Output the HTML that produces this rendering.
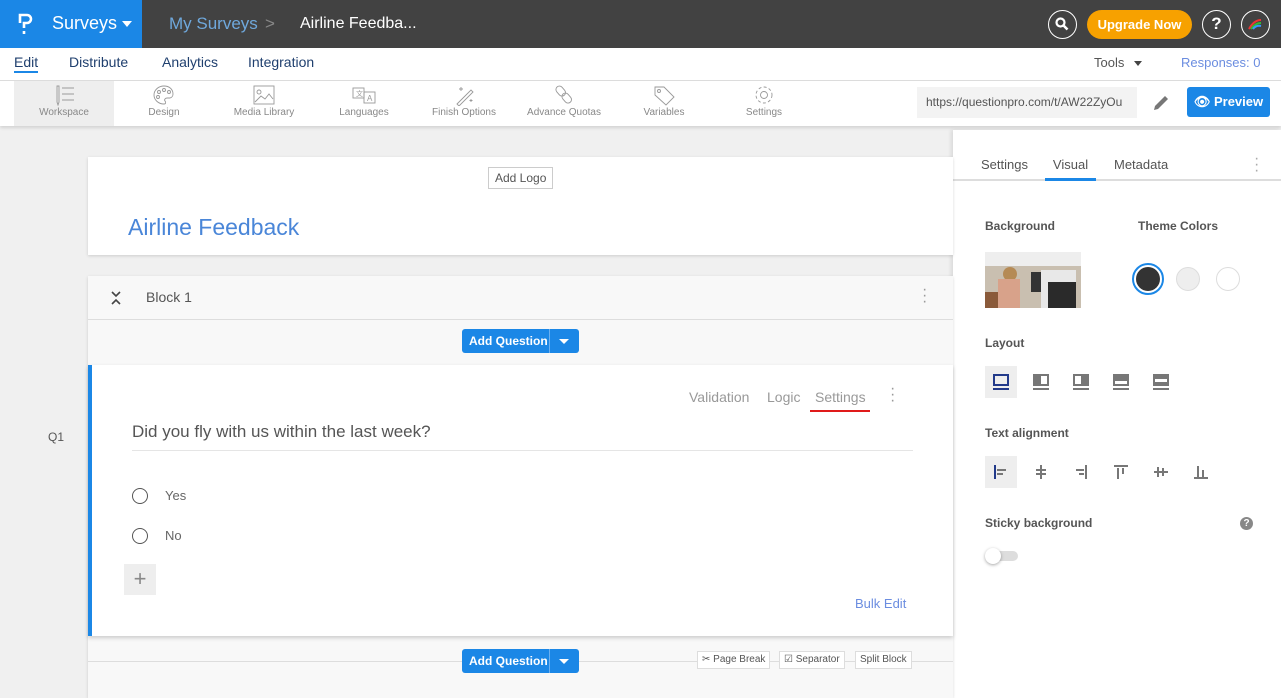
<!DOCTYPE html>
<html><head><meta charset="utf-8"><style>
*{box-sizing:border-box;margin:0;padding:0}
body{width:1281px;height:698px;overflow:hidden;font-family:"Liberation Sans",sans-serif;background:#f0f0f0;position:relative;color:#545454}
.abs{position:absolute}
.top{left:0;top:0;width:1281px;height:48px;background:#424242}
.brand{left:0;top:0;width:142px;height:48px;background:#1b87e6;color:#fff}
.nav2{left:0;top:48px;width:1281px;height:33px;background:#fff;border-bottom:1px solid #ddd;font-size:14px;color:#1f3f6e}
.tb{left:0;top:81px;width:1281px;height:45px;background:#fff;box-shadow:0 2px 3px rgba(0,0,0,.12)}
.ti{position:absolute;top:0;height:45px;width:100px;text-align:center;font-size:10px;color:#888}
.ti svg{display:block;margin:3px auto 1px}
.ti svg *{stroke-width:0.9}
.btn{background:#1b87e6;color:#fff;font-weight:bold;font-size:12px;border-radius:3px}
.rp{left:953px;top:130px;width:328px;height:568px;background:#fff;box-shadow:-2px 0 4px rgba(0,0,0,.1)}
.lbl{font-size:12px;font-weight:bold;color:#555}
.ic{position:absolute;width:32px;height:32px;top:0}
.chip{position:absolute;top:651px;height:18px;border:1px solid #ddd;background:#fff;font-size:10px;padding:2px 4px;color:#555}
</style></head><body>
<div class="abs top"></div>
<div class="abs brand">
 <svg class="abs" style="left:17px;top:12px" width="20" height="24"><path d="M3 11V3h7a4 4 0 0 1 0 8H7v5" stroke="#fff" stroke-width="2.6" fill="none"/><rect x="5.7" y="19" width="2.6" height="3" fill="#fff"/></svg>
 <div class="abs" style="left:52px;top:13px;font-size:18px">Surveys</div>
 <div class="abs" style="left:122px;top:21px;border:5px solid transparent;border-top:6px solid #fff"></div>
</div>
<div class="abs" style="left:169px;top:14px;font-size:17px;color:#6fa8dc">My Surveys</div>
<div class="abs" style="left:265px;top:14px;font-size:17px;color:#888">&gt;</div>
<div class="abs" style="left:300px;top:15px;font-size:16px;color:#fff">Airline Feedba...</div>
<div class="abs" style="left:1048px;top:10px;width:29px;height:29px;border:1.5px solid #fff;border-radius:50%"><svg width="26" height="26" viewBox="0 0 26 26"><circle cx="11.5" cy="11.5" r="4" stroke="#fff" stroke-width="2.2" fill="none"/><path d="M14.5 14.5l4 4" stroke="#fff" stroke-width="2.6"/></svg></div>
<div class="abs" style="left:1087px;top:10px;width:105px;height:29px;background:#f7a100;border-radius:15px;color:#fff;font-weight:bold;font-size:13px;text-align:center;line-height:29px">Upgrade Now</div>
<div class="abs" style="left:1202px;top:10px;width:29px;height:29px;border:1.5px solid #fff;border-radius:50%;color:#fff;font-weight:bold;font-size:17px;text-align:center;line-height:26px">?</div>
<div class="abs" style="left:1241px;top:10px;width:29px;height:29px;border:1.5px solid #fff;border-radius:50%"><svg width="26" height="26"><path d="M7 18q5-9 12-9" stroke="#e33" stroke-width="2" fill="none"/><path d="M9 18q4-6 10-6" stroke="#3b3" stroke-width="2" fill="none"/><path d="M11 18q3-4 8-3" stroke="#39f" stroke-width="2" fill="none"/></svg></div>

<div class="abs nav2">
 <span class="abs" style="left:14px;top:6px;color:#1f3f6e;border-bottom:2px solid #1b87e6;padding-bottom:1px">Edit</span>
 <span class="abs" style="left:69px;top:6px">Distribute</span>
 <span class="abs" style="left:162px;top:6px">Analytics</span>
 <span class="abs" style="left:248px;top:6px">Integration</span>
 <span class="abs" style="left:1094px;top:7px;font-size:13px;color:#555">Tools</span>
 <span class="abs" style="left:1134px;top:13px;border:4px solid transparent;border-top:5px solid #444"></span>
 <span class="abs" style="left:1181px;top:7px;font-size:13px;color:#6b8de0">Responses: 0</span>
</div>

<div class="abs tb">
 <div class="ti" style="left:14px;width:100px;background:#eee"><svg width="26" height="22"><path d="M6 2v16l1 3 1-3V2z" stroke="#999" fill="none"/><path d="M11 4h12M11 10h12M11 16h12" stroke="#999"/></svg>Workspace</div>
 <div class="ti" style="left:114px"><svg width="26" height="22"><path d="M13 2a10 9 0 1 0 0 18c2 0 2-2 1-3s0-3 2-3h3a4 4 0 0 0 3-4C22 5 18 2 13 2z" stroke="#999" fill="none"/><circle cx="8" cy="8" r="1.5" stroke="#999" fill="none"/><circle cx="13" cy="6" r="1.5" stroke="#999" fill="none"/><circle cx="18" cy="8" r="1.5" stroke="#999" fill="none"/><circle cx="7" cy="13" r="1.5" stroke="#999" fill="none"/></svg>Design</div>
 <div class="ti" style="left:214px"><svg width="26" height="22"><rect x="3" y="2" width="20" height="18" stroke="#999" fill="none"/><circle cx="8" cy="8" r="2" stroke="#999" fill="none"/><path d="M4 18l6-6 4 3 4-5 4 5" stroke="#999" fill="none"/></svg>Media Library</div>
 <div class="ti" style="left:314px"><svg width="26" height="22"><rect x="2" y="4" width="11" height="10" stroke="#999" fill="none"/><rect x="13" y="8" width="11" height="11" stroke="#999" fill="none"/><text x="5" y="12" font-size="7" fill="#999">文</text><text x="16" y="17" font-size="8" fill="#999">A</text></svg>Languages</div>
 <div class="ti" style="left:414px"><svg width="26" height="22"><path d="M6 20L20 6l2 2L8 22z" stroke="#999" fill="none"/><path d="M10 3v4M8 5h4M20 15v3M18.5 16.5h3" stroke="#999"/></svg>Finish Options</div>
 <div class="ti" style="left:514px"><svg width="26" height="22"><rect x="6" y="2" width="7" height="11" rx="3.5" transform="rotate(-40 9 7)" stroke="#999" fill="none"/><rect x="12" y="9" width="7" height="11" rx="3.5" transform="rotate(-40 15 14)" stroke="#999" fill="none"/></svg>Advance Quotas</div>
 <div class="ti" style="left:614px"><svg width="26" height="22"><path d="M4 3h9l10 10-8 8L4 11z" stroke="#999" fill="none"/><circle cx="8" cy="7" r="1.5" stroke="#999" fill="none"/></svg>Variables</div>
 <div class="ti" style="left:714px"><svg width="26" height="22"><circle cx="13" cy="11" r="3.5" stroke="#999" fill="none"/><circle cx="13" cy="11" r="8" stroke="#999" stroke-dasharray="3 2.3" fill="none"/></svg>Settings</div>
 <div class="abs" style="left:917px;top:6px;width:220px;height:31px;background:#f3f3f3;font-size:12px;color:#555;padding:8px 9px;white-space:nowrap;overflow:hidden">https://questionpro.com/t/AW22ZyOu</div>
 <svg class="abs" style="left:1150px;top:11px" width="22" height="22"><path d="M4 18l1-4L15 4l3 3L8 17z" fill="#777"/></svg>
 <div class="abs btn" style="left:1187px;top:6px;width:83px;height:30px;line-height:30px;text-align:center;font-size:13px">&#128065;&#xFE0E; Preview</div>
</div>

<div class="abs rp">
 <div class="abs" style="left:0;top:18px;width:328px;height:33px;border-bottom:2px solid #ddd;font-size:13px">
  <span class="abs" style="left:28px;top:9px">Settings</span>
  <span class="abs" style="left:92px;top:0;width:51px;height:33px;border-bottom:3px solid #1b87e6;text-align:center;padding-top:9px">Visual</span>
  <span class="abs" style="left:161px;top:9px">Metadata</span>
  <span class="abs" style="left:301px;top:8px;width:4px;line-height:6px;font-size:16px;color:#aaa">·<br>·<br>·</span>
 </div>
 <div class="abs lbl" style="left:32px;top:89px">Background</div>
 <div class="abs lbl" style="left:185px;top:89px">Theme Colors</div>
 <svg class="abs" style="left:32px;top:122px" width="96" height="56"><rect width="96" height="56" fill="#c9bfb0"/><rect y="0" width="96" height="14" fill="#eee"/><rect x="56" y="18" width="35" height="38" fill="#e8e8e8"/><rect x="63" y="30" width="28" height="26" fill="#2a2a2a"/><circle cx="25" cy="22" r="7" fill="#b58a55"/><rect x="13" y="27" width="22" height="29" fill="#d8a28a"/><rect x="46" y="20" width="10" height="20" fill="#333"/><rect x="0" y="40" width="13" height="16" fill="#8a5a3a"/></svg>
 <div class="abs" style="left:179px;top:133px;width:32px;height:32px;border-radius:50%;border:2px solid #1b87e6;padding:2px"><div style="width:24px;height:24px;border-radius:50%;background:#333"></div></div>
 <div class="abs" style="left:223px;top:137px;width:24px;height:24px;border-radius:50%;background:#eee;border:1px solid #ddd"></div>
 <div class="abs" style="left:263px;top:137px;width:24px;height:24px;border-radius:50%;background:#fff;border:1px solid #ddd"></div>
 <div class="abs lbl" style="left:32px;top:206px">Layout</div>
 <div class="abs" style="left:32px;top:236px;width:320px;height:32px">
  <div class="ic" style="left:0;background:#eee"><svg width="32" height="32"><rect x="9" y="9" width="14" height="10" stroke="#223a8a" stroke-width="2" fill="none"/><path d="M8 23h16" stroke="#223a8a" stroke-width="2"/></svg></div>
  <div class="ic" style="left:40px"><svg width="32" height="32"><rect x="9" y="9" width="14" height="10" stroke="#777" stroke-width="2" fill="none"/><rect x="9" y="9" width="7" height="10" fill="#777"/><path d="M8 23h16" stroke="#777" stroke-width="2"/></svg></div>
  <div class="ic" style="left:80px"><svg width="32" height="32"><rect x="9" y="9" width="14" height="10" stroke="#777" stroke-width="2" fill="none"/><rect x="16" y="9" width="7" height="10" fill="#777"/><path d="M8 23h16" stroke="#777" stroke-width="2"/></svg></div>
  <div class="ic" style="left:120px"><svg width="32" height="32"><rect x="9" y="9" width="14" height="10" stroke="#777" stroke-width="2" fill="none"/><rect x="9" y="9" width="14" height="6" fill="#777"/><path d="M8 23h16" stroke="#777" stroke-width="2"/></svg></div>
  <div class="ic" style="left:160px"><svg width="32" height="32"><rect x="9" y="9" width="14" height="10" stroke="#777" stroke-width="2" fill="#777"/><rect x="10" y="13" width="12" height="3" fill="#fff"/><path d="M8 23h16" stroke="#777" stroke-width="2"/></svg></div>
 </div>
 <div class="abs lbl" style="left:32px;top:296px">Text alignment</div>
 <div class="abs" style="left:32px;top:326px;width:320px;height:32px">
  <div class="ic" style="left:0;background:#eee"><svg width="32" height="32"><path d="M10 9v14" stroke="#223a8a" stroke-width="2"/><path d="M12 14h9M12 18h6" stroke="#777" stroke-width="2"/></svg></div>
  <div class="ic" style="left:40px"><svg width="32" height="32"><path d="M16 9v14M11 14h10M11 18h10" stroke="#777" stroke-width="2"/></svg></div>
  <div class="ic" style="left:80px"><svg width="32" height="32"><path d="M21 9v14M11 14h8M14 18h5" stroke="#777" stroke-width="2"/></svg></div>
  <div class="ic" style="left:120px"><svg width="32" height="32"><path d="M9 10h14M13 12v11M18 12v6" stroke="#777" stroke-width="2"/></svg></div>
  <div class="ic" style="left:160px"><svg width="32" height="32"><path d="M9 16h14M13 11v10M18 12v8" stroke="#777" stroke-width="2"/></svg></div>
  <div class="ic" style="left:200px"><svg width="32" height="32"><path d="M9 22h14M13 10v11M18 14v7" stroke="#777" stroke-width="2"/></svg></div>
 </div>
 <div class="abs lbl" style="left:32px;top:386px">Sticky background</div>
 <div class="abs" style="left:287px;top:387px;width:13px;height:13px;border-radius:50%;background:#888;color:#fff;font-size:10px;font-weight:bold;text-align:center;line-height:13px">?</div>
 <div class="abs" style="left:33px;top:421px;width:32px;height:10px;border-radius:5px;background:#ddd"></div>
 <div class="abs" style="left:32px;top:418px;width:16px;height:16px;border-radius:50%;background:#fff;box-shadow:0 1px 3px rgba(0,0,0,.35)"></div>
</div>

<div class="abs" style="left:88px;top:157px;width:865px;height:98px;background:#fff;box-shadow:0 1px 3px rgba(0,0,0,.15)">
 <div class="abs" style="left:400px;top:10px;border:1px solid #ccc;padding:3px 6px;font-size:12px;color:#555">Add Logo</div>
 <div class="abs" style="left:40px;top:57px;font-size:23px;color:#4a86d8">Airline Feedback</div>
</div>

<div class="abs" style="left:88px;top:276px;width:865px;height:422px;background:#f8f8f8;box-shadow:0 1px 3px rgba(0,0,0,.15)">
 <div class="abs" style="left:0;top:0;width:865px;height:44px;border-bottom:1px solid #ddd">
  <svg class="abs" style="left:22px;top:14px" width="12" height="16"><path d="M2 2l4 4 4-4M2 14l4-4 4 4" stroke="#444" stroke-width="1.6" fill="none"/></svg>
  <span class="abs" style="left:58px;top:13px;font-size:14px;color:#555">Block 1</span>
  <span class="abs" style="left:834px;top:11px;line-height:6px;font-size:16px;color:#999">·<br>·<br>·</span>
 </div>
 <div class="abs btn" style="left:374px;top:53px;width:117px;height:24px;line-height:24px;padding-left:7px">Add Question<span class="abs" style="left:87px;top:0;width:1px;height:24px;background:#6cb0f0"></span><span class="abs" style="left:97px;top:10px;border:5px solid transparent;border-top:5px solid #fff"></span></div>
 <div class="abs" style="left:0;top:89px;width:865px;height:271px;background:#fff;border-left:4px solid #1b87e6;box-shadow:0 2px 4px rgba(0,0,0,.18)">
  <span class="abs" style="left:597px;top:24px;font-size:14px;color:#999">Validation</span>
  <span class="abs" style="left:675px;top:24px;font-size:14px;color:#999">Logic</span>
  <span class="abs" style="left:723px;top:24px;font-size:14px;color:#999">Settings</span>
  <span class="abs" style="left:718px;top:45px;width:60px;height:2px;background:#e01a1a"></span>
  <span class="abs" style="left:798px;top:21px;line-height:6px;font-size:16px;color:#999">·<br>·<br>·</span>
  <span class="abs" style="left:40px;top:57px;font-size:17px;color:#555">Did you fly with us within the last week?</span>
  <span class="abs" style="left:40px;top:85px;width:781px;height:1px;background:#e5e5e5"></span>
  <span class="abs" style="left:40px;top:123px;width:16px;height:16px;border:1.5px solid #555;border-radius:50%"></span>
  <span class="abs" style="left:73px;top:123px;font-size:13px;color:#666">Yes</span>
  <span class="abs" style="left:40px;top:163px;width:16px;height:16px;border:1.5px solid #555;border-radius:50%"></span>
  <span class="abs" style="left:73px;top:163px;font-size:13px;color:#666">No</span>
  <span class="abs" style="left:32px;top:199px;width:32px;height:31px;background:#eee;text-align:center;font-size:22px;line-height:30px;color:#888">+</span>
  <span class="abs" style="left:763px;top:231px;font-size:13px;color:#6b8de0">Bulk Edit</span>
 </div>
 <div class="abs" style="left:0;top:385px;width:865px;height:1px;background:#ddd"></div>
 <div class="abs btn" style="left:374px;top:373px;width:117px;height:24px;line-height:24px;padding-left:7px">Add Question<span class="abs" style="left:87px;top:0;width:1px;height:24px;background:#6cb0f0"></span><span class="abs" style="left:97px;top:10px;border:5px solid transparent;border-top:5px solid #fff"></span></div>
</div>
<div class="chip" style="left:697px">&#9986; Page Break</div>
<div class="chip" style="left:779px">&#9745; Separator</div>
<div class="chip" style="left:855px">Split Block</div>
<div class="abs" style="left:48px;top:430px;font-size:12px;color:#555">Q1</div>
</body></html>
